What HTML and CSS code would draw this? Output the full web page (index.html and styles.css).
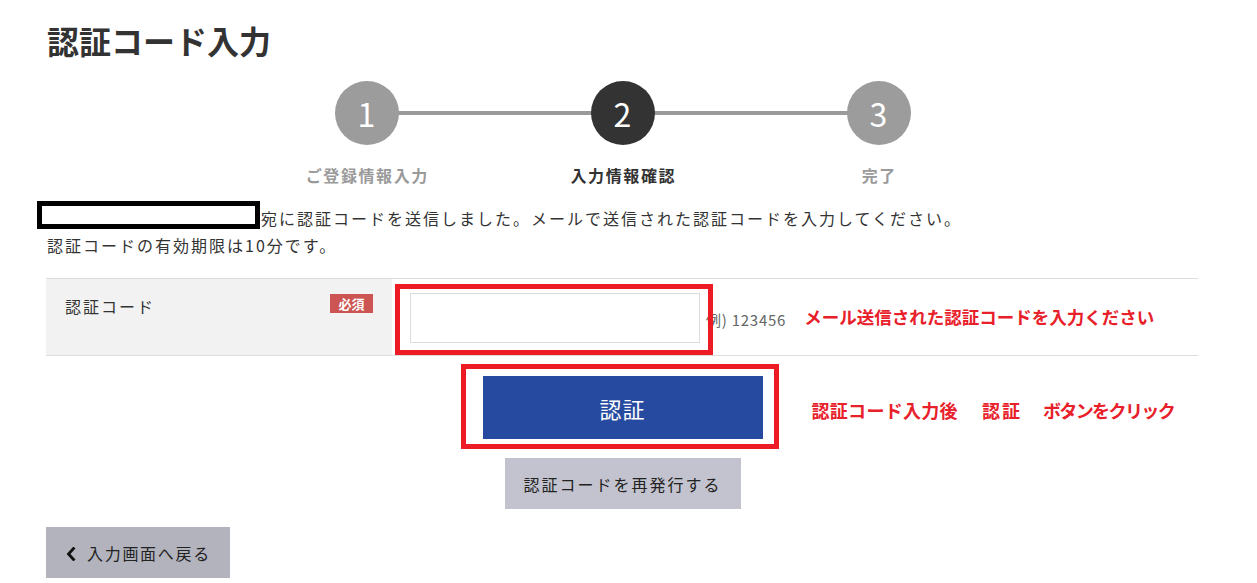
FILE: index.html
```html
<!DOCTYPE html>
<html lang="ja">
<head>
<meta charset="utf-8">
<title>認証コード入力</title>
<link rel="stylesheet" href="styles.css">
</head>
<body>
<main class="page">
  <h1 class="title">認証コード入力</h1>

  <ol class="steps">
    <li class="step"><span class="step-num">1</span><span class="step-label">ご登録情報入力</span></li>
    <li class="step is-current"><span class="step-num">2</span><span class="step-label">入力情報確認</span></li>
    <li class="step"><span class="step-num">3</span><span class="step-label">完了</span></li>
  </ol>

  <div class="message">
    <p class="msg-line"><span class="redact"></span>宛に認証コードを送信しました。メールで送信された認証コードを入力してください。</p>
    <p class="msg-line">認証コードの有効期限は10分です。</p>
  </div>

  <div class="form-row">
    <div class="form-th">
      <span class="th-label">認証コード</span>
      <span class="badge">必須</span>
    </div>
    <div class="form-td">
      <span class="input-wrap"><input class="code-input" type="text"></span>
      <span class="example">例) 123456</span>
      <span class="note">メール送信された認証コードを入力ください</span>
    </div>
  </div>

  <div class="actions">
    <div class="submit-wrap">
      <button class="btn-submit" type="button">認証</button>
      <span class="note note-side"><span class="n-a">認証コード入力後</span><span class="sp"></span><span class="n-b">認証</span><span class="sp sp2"></span><span class="n-c">ボタンをクリック</span></span>
    </div>
    <button class="btn-reissue" type="button">認証コードを再発行する</button>
  </div>

  <button class="btn-back" type="button"><svg class="chev" viewBox="0 0 10 14" width="10" height="14"><path d="M7.5 1.5 L2.5 7 L7.5 12.5" fill="none" stroke="#111" stroke-width="2.8" stroke-linecap="square"/></svg>入力画面へ戻る</button>
</main>
</body>
</html>
```

FILE: styles.css
```css
* { box-sizing: border-box; }

html, body {
  margin: 0;
  padding: 0;
  background: #fff;
}

body {
  font-family: "Noto Sans CJK JP", "Noto Sans", sans-serif;
  color: #333;
  font-size: 16px;
}

.page {
  width: 1151px;
  margin-left: 47px;
}

.title {
  margin: 0;
  padding-top: 16px;
  font-size: 32px;
  line-height: 48px;
  font-weight: 700;
  color: #333;
  letter-spacing: 0;
}

.steps {
  list-style: none;
  margin: 17px 0 0;
  padding: 0;
  display: grid;
  grid-template-columns: repeat(3, 256px);
  justify-content: center;
  position: relative;
}

.steps::before {
  content: "";
  position: absolute;
  left: 0;
  right: 0;
  top: 30px;
  height: 4px;
  margin: 0 auto;
  width: 512px;
  background: #9a9a9a;
}

.step {
  display: flex;
  flex-direction: column;
  align-items: center;
  position: relative;
}

.step-num {
  width: 64px;
  height: 64px;
  border-radius: 50%;
  background: #9c9c9c;
  color: #fff;
  font-size: 32px;
  line-height: 64px;
  text-align: center;
  font-weight: 400;
}

.is-current .step-num { background: #333; }

.step-label {
  margin-top: 19px;
  font-size: 16px;
  line-height: 22px;
  font-weight: 700;
  letter-spacing: 0.1em;
  color: #9a9a9a;
  padding-left: 0.1em;
}

.is-current .step-label { color: #333; }

.message {
  margin-top: 19px;
}

.msg-line {
  margin: 0;
  font-size: 16px;
  line-height: 27px;
  letter-spacing: 2px;
  color: #333;
}

.redact {
  display: inline-block;
  width: 223px;
  height: 28px;
  margin: -4px 1px -4px -10px;
  border: 5px solid #000;
  background: #fff;
  vertical-align: baseline;
}

.form-row {
  margin-top: 19px;
  display: grid;
  grid-template-columns: 346px 1fr;
  border-top: 1px solid #ddd;
  border-bottom: 1px solid #ddd;
  margin-left: -1px;
  width: 1152px;
}

.form-th {
  background: #f2f2f2;
  display: flex;
  justify-content: space-between;
  align-items: flex-start;
  padding: 15px 19px 0 19px;
}

.th-label {
  font-size: 16px;
  line-height: 24px;
  letter-spacing: 2px;
  color: #333;
}

.badge {
  display: inline-block;
  width: 43px;
  height: 19px;
  line-height: 19px;
  text-align: center;
  background: #cc5452;
  color: #fff;
  font-size: 13px;
  font-weight: 700;
}

.form-td {
  display: flex;
  align-items: center;
  padding: 14px 0 12px 18px;
}

.input-wrap {
  position: relative;
  display: block;
  width: 290px;
  height: 50px;
}

.input-wrap::after {
  content: "";
  position: absolute;
  left: -15px;
  right: -13px;
  top: -9px;
  bottom: -12px;
  border: 5px solid #ed1c24;
  pointer-events: none;
}

.code-input {
  display: block;
  width: 290px;
  height: 50px;
  border: 1px solid #ddd;
  background: #fff;
  margin: 0;
  padding: 0 10px;
  font: inherit;
}

.example {
  margin-left: 6px;
  font-size: 15px;
  color: #666;
  letter-spacing: 0.05em;
  margin-top: 2px;
}

.note {
  color: #e8202a;
  font-weight: 700;
  font-size: 17.5px;
  line-height: 24px;
  letter-spacing: 0;
}

.form-td .note {
  margin-left: 18px;
  margin-top: -3px;
}

.actions {
  display: flex;
  flex-direction: column;
  align-items: center;
  margin-top: 20px;
}

.submit-wrap {
  position: relative;
  width: 280px;
  height: 63px;
}

.submit-wrap::before {
  content: "";
  position: absolute;
  left: -22px;
  right: -16px;
  top: -12px;
  bottom: -10px;
  border: 5px solid #ed1c24;
  pointer-events: none;
}

.btn-submit {
  display: block;
  width: 280px;
  height: 63px;
  border: 0;
  margin: 0;
  padding: 0;
  background: #264aa0;
  color: #fff;
  font-family: "Noto Sans CJK JP", sans-serif;
  font-size: 22px;
  letter-spacing: 0.05em;
}

.note-side {
  position: absolute;
  left: 329px;
  top: 22px;
  white-space: nowrap;
  font-size: 18px;
  display: flex;
}

.n-a { letter-spacing: 0.3px; }
.n-b { letter-spacing: 2px; }
.n-c { letter-spacing: -1.6px; }

.sp {
  display: inline-block;
  width: 24px;
}

.sp2 { width: 21px; }

.btn-reissue {
  margin-top: 19px;
  width: 236px;
  height: 51px;
  border: 0;
  padding: 0;
  background: #c3c3cf;
  color: #222;
  font-family: "Noto Sans CJK JP", sans-serif;
  font-size: 16px;
  letter-spacing: 2px;
}

.btn-back {
  display: flex;
  align-items: center;
  margin-top: 18px;
  margin-left: -1px;
  width: 184px;
  height: 51px;
  border: 0;
  padding: 0 0 0 20px;
  background: #b3b3be;
  color: #222;
  font-family: "Noto Sans CJK JP", sans-serif;
  font-size: 16px;
  letter-spacing: 1.7px;
}

.chev {
  margin-right: 11px;
  margin-top: 2px;
}
```
